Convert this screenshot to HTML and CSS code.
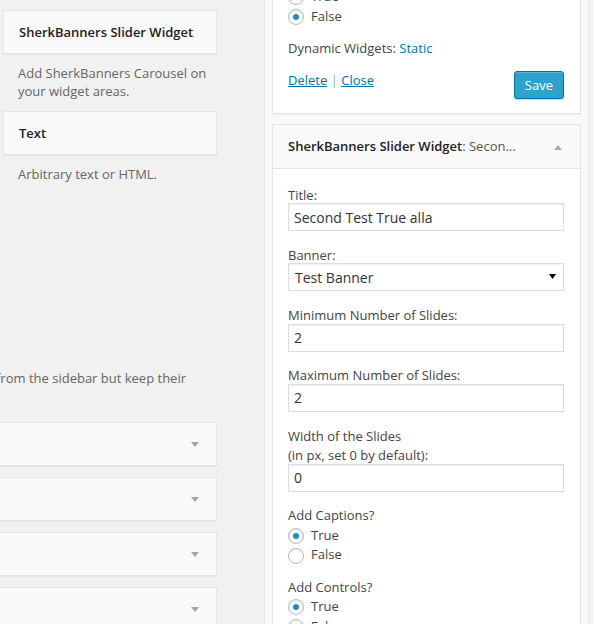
FILE: index.html
```html
<!DOCTYPE html>
<html>
<head>
<meta charset="utf-8">
<title>Widgets</title>
<link rel="stylesheet" href="styles.css">
</head>
<body>
<div class="page">
  <div class="left">
    <div class="avail">
      <div class="wcard">SherkBanners Slider Widget</div>
      <div class="wdesc">Add SherkBanners Carousel on your widget areas.</div>
      <div class="wcard">Text</div>
      <div class="wdesc">Arbitrary text or HTML.</div>
    </div>
    <div class="inactive-desc"><span>Drag widgets here to remove them from the sidebar but keep their</span></div>
    <div class="bars">
      <div class="bar"><svg class="tri" width="8" height="5" viewBox="0 0 8 5"><polygon points="0,0 8,0 4,5"/></svg></div>
      <div class="bar"><svg class="tri" width="8" height="5" viewBox="0 0 8 5"><polygon points="0,0 8,0 4,5"/></svg></div>
      <div class="bar"><svg class="tri" width="8" height="5" viewBox="0 0 8 5"><polygon points="0,0 8,0 4,5"/></svg></div>
      <div class="bar"><svg class="tri" width="8" height="5" viewBox="0 0 8 5"><polygon points="0,0 8,0 4,5"/></svg></div>
    </div>
  </div>
  <div class="right">
    <div class="holder">
      <div class="widget first">
        <div class="winside">
          <div class="radios">
            <label class="rrow"><input class="radio" type="radio" name="r0"> True</label>
            <label class="rrow"><input class="radio" type="radio" name="r0" checked> False</label>
          </div>
          <p class="dyn">Dynamic Widgets: <a href="#">Static</a></p>
          <div class="actions">
            <div class="links"><a href="#" class="ul">Delete</a> <span class="sep">|</span> <a href="#" class="ul">Close</a></div>
            <button class="btn-primary" type="button">Save</button>
          </div>
        </div>
      </div>
      <div class="widget">
        <div class="wtop">
          <h4 class="wtitle">SherkBanners Slider Widget<span class="in-title">: Secon...</span></h4>
          <svg class="tri up" width="8" height="5" viewBox="0 0 8 5"><polygon points="0,5 4,0 8,5"/></svg>
        </div>
        <div class="winside form">
          <div class="field">
            <label class="flabel">Title:</label>
            <input class="widefat" type="text" value="Second Test True alla">
          </div>
          <div class="field">
            <label class="flabel">Banner:</label>
            <div class="select-wrap">
              <select class="widefat sel"><option>Test Banner</option></select>
              <svg class="sel-arrow" width="7" height="5" viewBox="0 0 7 5"><polygon points="0,0 7,0 3.5,5"/></svg>
            </div>
          </div>
          <div class="field">
            <label class="flabel">Minimum Number of Slides:</label>
            <input class="widefat" type="text" value="2">
          </div>
          <div class="field">
            <label class="flabel">Maximum Number of Slides:</label>
            <input class="widefat" type="text" value="2">
          </div>
          <div class="field">
            <label class="flabel">Width of the Slides<br>(in px, set 0 by default):</label>
            <input class="widefat" type="text" value="0">
          </div>
          <div class="field rad">
            <div class="rlabel">Add Captions?</div>
            <div class="radios">
              <label class="rrow"><input class="radio" type="radio" name="r1" checked> True</label>
              <label class="rrow"><input class="radio" type="radio" name="r1"> False</label>
            </div>
          </div>
          <div class="field rad">
            <div class="rlabel">Add Controls?</div>
            <div class="radios">
              <label class="rrow"><input class="radio" type="radio" name="r2" checked> True</label>
              <label class="rrow"><input class="radio" type="radio" name="r2"> False</label>
            </div>
          </div>
        </div>
      </div>
    </div>
  </div>
</div>
</body>
</html>
```
FILE: styles.css
```css
* { box-sizing: border-box; }
html, body {
  margin: 0;
  padding: 0;
  width: 593px;
  height: 624px;
  overflow: hidden;
  background: #f1f1f1;
}
body {
  font-family: "Open Sans", "Liberation Sans", sans-serif;
  font-size: 13px;
  line-height: 19.5px;
  color: #444;
}
a { color: #0074a2; text-decoration: none; }
a.ul { text-decoration: underline; }

.page {
  display: flex;
  align-items: flex-start;
}

/* left column */
.left {
  width: 217px;
  flex-shrink: 0;
}
.avail {
  padding: 10px 0 0 3px;
}
.wcard {
  height: 44px;
  line-height: 42px;
  padding: 0 15px;
  background: #fafafa;
  border: 1px solid #e5e5e5;
  box-shadow: 0 1px 1px rgba(0,0,0,0.04);
  font-weight: 600;
  color: #222;
}
.wdesc {
  padding: 10px 8px 11px 15px;
  line-height: 18px;
  color: #666;
}
.inactive-desc {
  margin-top: 175px;
  display: flex;
  justify-content: flex-end;
  padding-right: 31px;
  line-height: 18px;
  color: #666;
}
.inactive-desc span { white-space: nowrap; }
.bars {
  margin-top: 35px;
  margin-left: -30px;
}
.bar {
  height: 44px;
  margin-bottom: 11px;
  background: #fafafa;
  border: 1px solid #e5e5e5;
  box-shadow: 0 1px 1px rgba(0,0,0,0.04);
  display: flex;
  align-items: center;
  justify-content: flex-end;
  padding-right: 17px;
}
.tri { display: block; fill: #a0a5aa; }

/* right column */
.right {
  margin-left: 47px;
  width: 325px;
  flex-shrink: 0;
}
.holder {
  margin-top: -13px;
  background: #f9f9f9;
  border-left: 1px solid #e8e8e8;
  border-right: 1px solid #e5e5e5;
  padding: 0 7px;
  height: 700px;
}
.widget {
  background: #fff;
  border: 1px solid #e5e5e5;
  box-shadow: 0 1px 1px rgba(0,0,0,0.04);
  margin-bottom: 10px;
}
.widget.first { border-top: 0; }
.winside {
  padding: 0 16px 14.5px 15px;
}
.radios { display: flex; flex-direction: column; }
.rrow {
  display: flex;
  align-items: center;
  gap: 3px;
  height: 19.5px;
}
.radio {
  -webkit-appearance: none;
  appearance: none;
  width: 16px;
  height: 16px;
  margin: 1px 4px 0 0;
  border: 1px solid #b4b9be;
  border-radius: 50%;
  background: #fff;
  box-shadow: inset 0 1px 2px rgba(0,0,0,0.1);
  display: grid;
  place-content: center;
  flex-shrink: 0;
}
.radio:checked::before {
  content: "";
  width: 6px;
  height: 6px;
  border-radius: 50%;
  background: #1e8cbe;
}
.dyn { margin: 13px 0 0 0; }
.actions {
  margin-top: 12px;
  display: flex;
  justify-content: space-between;
  align-items: flex-start;
}
.links { line-height: 18px; }
.sep { color: #a0a5aa; }
.btn-primary {
  font-family: inherit;
  font-size: 13px;
  height: 28px;
  line-height: 26px;
  padding: 0 10px 1px;
  border: 1px solid #0074a2;
  border-radius: 3px;
  background: #2ea2cc;
  color: #fff;
  box-shadow: inset 0 1px 0 rgba(120,200,230,0.5), 0 1px 0 rgba(0,0,0,0.15);
}

.wtop {
  height: 44px;
  background: #fafafa;
  border-bottom: 1px solid #e5e5e5;
  display: flex;
  align-items: center;
  justify-content: space-between;
  padding: 0 17px 0 15px;
}
.wtitle {
  margin: 0;
  font-size: 13px;
  font-weight: 600;
  color: #222;
  white-space: nowrap;
}
.in-title { font-weight: 400; color: #555; }
.tri.up { fill: #aaa; margin-top: 2px; margin-right: 1px; }

.form { padding-top: 14.5px; }
.field { margin-bottom: 12.75px; }
.field.rad { margin-bottom: 10.75px; }
.flabel { display: block; padding-top: 2px; margin-bottom: -2px; }
.rlabel { padding-top: 2px; }
.widefat {
  display: block;
  width: 100%;
  height: 28px;
  margin: 0;
  padding: 0 5px;
  border: 1px solid #ddd;
  box-shadow: inset 0 1px 2px rgba(0,0,0,0.07);
  background: #fff;
  font-family: "Open Sans", "Liberation Sans", sans-serif;
  font-size: 14px;
  color: #333;
  outline: none;
  border-radius: 0;
}
.select-wrap { position: relative; }
.sel {
  -webkit-appearance: none;
  appearance: none;
  padding: 0 20px 0 6px;
}
.sel-arrow {
  position: absolute;
  right: 8px;
  top: 11px;
  fill: #000;
}
```
